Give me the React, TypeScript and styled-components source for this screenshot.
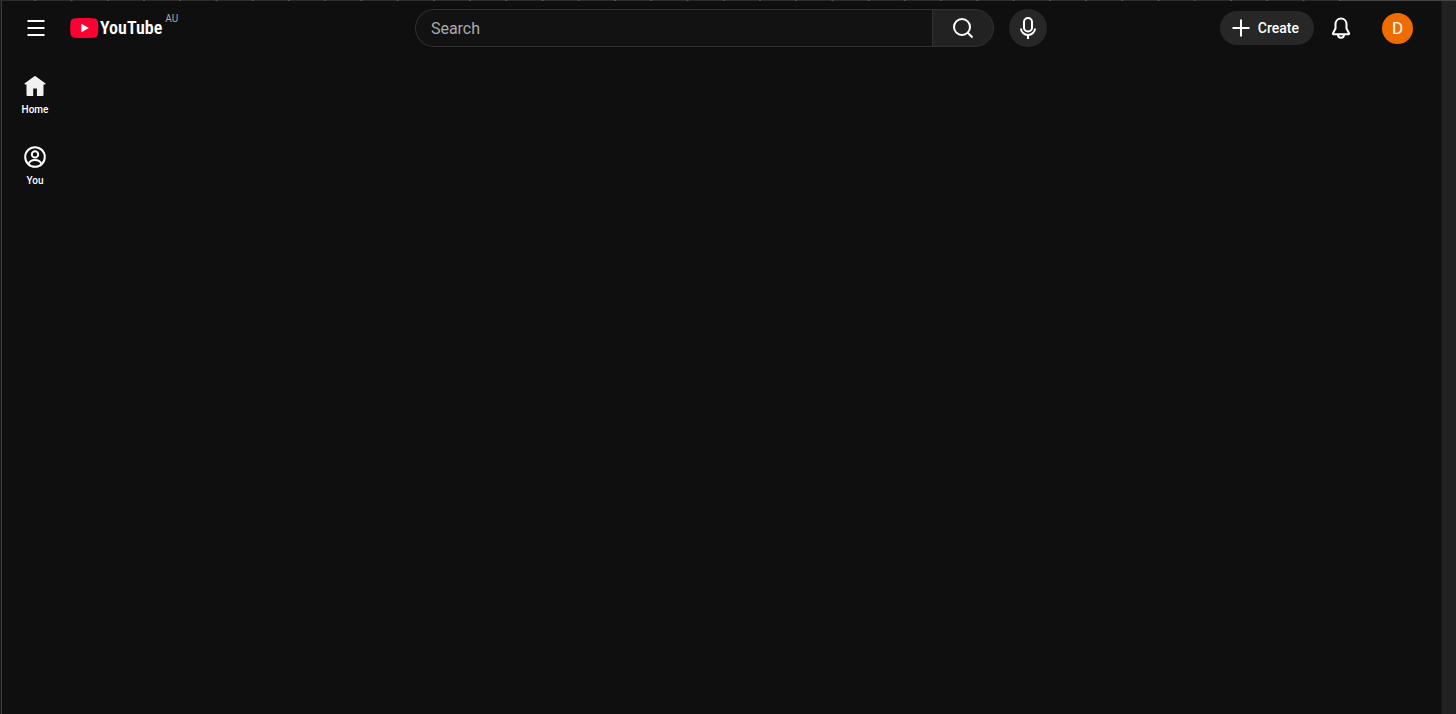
import React from "react";
import styled, { createGlobalStyle } from "styled-components";

const GlobalStyle = createGlobalStyle`
  * { box-sizing: border-box; }
  body {
    margin: 0;
    background: #0f0f0f;
    color: #fff;
    font-family: Roboto, "Liberation Sans", sans-serif;
  }
  button, input { font: inherit; color: inherit; }
`;

const Page = styled.div`
  display: flex;
  flex-direction: column;
  min-height: 100vh;
`;

const TabStrip = styled.div`
  display: flex;
  height: 1px;
  background: #444;
`;

const TabTicks = styled.div`
  flex: 1;
  margin-right: 115px;
  background: linear-gradient(#555, #555) right / 1px 1px no-repeat,
    linear-gradient(270deg, #555 2px, #2c2c2c 2px) left / calc(100% / 37) 100%;
`;

const Frame = styled.div`
  display: flex;
  flex: 1;
  border-left: 1px solid #1a1a1a;
`;

const Content = styled.div`
  flex: 1;
  min-width: 0;
  border-left: 1px solid #3c3c3c;
`;

const ScrollTrack = styled.div`
  width: 15px;
  background: #212121;
  border-left: 1px solid #191919;
`;

const Masthead = styled.header`
  display: flex;
  align-items: center;
  justify-content: space-between;
  height: 54px;
  padding: 0 28px 0 15px;
`;

const Start = styled.div`
  display: flex;
  align-items: center;
  gap: 15px;
  width: 225px;
`;

const Center = styled.div`
  display: flex;
  align-items: center;
  gap: 15px;
  flex: 0 1 632px;
`;

const End = styled.div`
  display: flex;
  align-items: center;
`;

const IconButton = styled.button<{ $size: number; $filled?: boolean }>`
  display: grid;
  place-items: center;
  flex: none;
  width: ${(p) => p.$size}px;
  height: ${(p) => p.$size}px;
  padding: 0;
  border: 0;
  border-radius: 50%;
  background: ${(p) => (p.$filled ? "#272727" : "transparent")};
  cursor: pointer;
`;

const LogoLink = styled.a`
  display: flex;
  align-items: center;
  gap: 1px;
  color: #fff;
  text-decoration: none;
`;

const Wordmark = styled.span`
  font: 600 18px/24px "Roboto Condensed", "Liberation Sans Narrow", "Liberation Sans", sans-serif;
`;

const Country = styled.span`
  align-self: flex-start;
  margin: -3px 0 0 2px;
  font-size: 10px;
  line-height: 12px;
  color: #aaa;
`;

const SearchForm = styled.form`
  display: flex;
  flex: 1;
  height: 38px;
`;

const SearchInput = styled.input`
  flex: 1;
  min-width: 0;
  padding: 0 15px;
  border: 1px solid #303030;
  border-right: 0;
  border-radius: 19px 0 0 19px;
  background: #121212;
  font-size: 16px;
  outline: none;
  &::placeholder { color: #aaa; opacity: 1; }
`;

const SearchButton = styled.button`
  display: grid;
  place-items: center;
  width: 62px;
  padding: 0;
  border: 1px solid #303030;
  border-radius: 0 19px 19px 0;
  background: #222;
  cursor: pointer;
`;

const CreateButton = styled.button`
  display: flex;
  align-items: center;
  gap: 5px;
  height: 34px;
  margin-right: 8px;
  padding: 0 15px 0 9px;
  border: 0;
  border-radius: 17px;
  background: #272727;
  font-size: 14px;
  font-weight: 500;
  cursor: pointer;
`;

const Avatar = styled.button`
  width: 31px;
  height: 31px;
  margin-left: 22px;
  padding: 0;
  border: 0;
  border-radius: 50%;
  background: #ef6c00;
  color: #fff;
  font-size: 17px;
  line-height: 31px;
  cursor: pointer;
`;

const MiniGuide = styled.nav`
  display: flex;
  flex-direction: column;
  width: 66px;
  padding-top: 4px;
`;

const GuideLink = styled.a`
  display: flex;
  flex-direction: column;
  align-items: center;
  gap: 5px;
  height: 71px;
  padding-top: 15px;
  color: #fff;
  font-size: 10px;
  line-height: 14px;
  font-weight: 500;
  text-decoration: none;
`;

const Svg = styled.svg`
  display: block;
  width: 24px;
  height: 24px;
  fill: none;
  stroke: #fff;
  stroke-width: 2;
`;

const MenuIcon = () => (
  <Svg viewBox="0 0 24 24" aria-hidden="true">
    <path d="M3.500 5h17M3.500 12h17M3.500 19h17" />
  </Svg>
);

const PlayLogo = () => (
  <svg width="29" height="20" viewBox="0 0 29 20" aria-hidden="true">
    <path
      fill="#ff0033"
      d="M27.700 3.100A3.600 3.600 0 0 0 25.200.6C23 0 14.300 0 14.300 0S5.500 0 3.300.6A3.600 3.600 0 0 0 .8 3.100C.2 5.300.2 10 .2 10s0 4.700.6 6.900a3.600 3.600 0 0 0 2.500 2.500c2.200.6 11 .6 11 .6s8.700 0 10.900-.6a3.600 3.600 0 0 0 2.500-2.500c.6-2.200.6-6.900.6-6.900s0-4.700-.6-6.900Z"
    />
    <path fill="#fff" d="M11.400 14.200V5.800l7.400 4.200Z" />
  </svg>
);

const SearchIcon = () => (
  <Svg viewBox="0 0 24 24" aria-hidden="true">
    <circle cx="11" cy="11" r="8" />
    <path d="m16.700 16.700 4.800 4.800" />
  </Svg>
);

const MicIcon = () => (
  <Svg viewBox="0 0 24 24" aria-hidden="true">
    <rect x="8" y="2" width="8" height="13.500" rx="4" />
    <path d="M5 12.500a7 6.500 0 0 0 14 0M12 19v4" />
  </Svg>
);

const PlusIcon = () => (
  <Svg viewBox="0 0 24 24" aria-hidden="true">
    <path d="M12 3.500v17M3.500 12h17" />
  </Svg>
);

const BellIcon = () => (
  <Svg viewBox="0 0 24 24" aria-hidden="true">
    <path
      strokeLinejoin="round"
      d="M12 2.500c-3.100 0-5.500 2.500-5.500 5.800v4.200L4 17.200c-.3.600 0 1.100.6 1.100h14.800c.6 0 .9-.5.600-1.100l-2.500-4.700V8.300c0-3.300-2.400-5.800-5.500-5.800Z"
    />
    <path d="M9 18.500c0 1.900 1.300 3.200 3 3.200s3-1.300 3-3.200" />
  </Svg>
);

const HomeIcon = () => (
  <Svg viewBox="0 0 24 24" aria-hidden="true">
    <path
      fill="#f1f1f1"
      stroke="none"
      d="m11.400 2.300-9.600 7a.7.7 0 0 0 .4 1.300h1.300v10.100c0 .8.600 1.300 1.300 1.300h5.400v-7.600h3.700V22h5.300c.8 0 1.300-.5 1.300-1.300V10.600h1.300a.7.7 0 0 0 .4-1.300l-9.600-7a1 1 0 0 0-1.200 0Z"
    />
  </Svg>
);

const YouIcon = () => (
  <Svg viewBox="0 0 24 24" aria-hidden="true">
    <circle cx="12" cy="12" r="9.800" />
    <circle cx="12" cy="9.400" r="3.200" />
    <path d="M5.600 19c.9-2.600 3.300-4 6.400-4s5.500 1.400 6.400 4" />
  </Svg>
);

export default function App() {
  return (
    <>
      <GlobalStyle />
      <Page>
        <TabStrip><TabTicks /></TabStrip>
        <Frame>
          <Content>
            <Masthead>
              <Start>
                <IconButton $size={38} aria-label="Guide"><MenuIcon /></IconButton>
                <LogoLink href="#" aria-label="YouTube AU">
                  <PlayLogo />
                  <Wordmark>YouTube</Wordmark>
                  <Country>AU</Country>
                </LogoLink>
              </Start>
              <Center>
                <SearchForm role="search" onSubmit={(e) => e.preventDefault()}>
                  <SearchInput aria-label="Search" placeholder="Search" />
                  <SearchButton aria-label="Submit search"><SearchIcon /></SearchButton>
                </SearchForm>
                <IconButton $size={38} $filled aria-label="Search with your voice"><MicIcon /></IconButton>
              </Center>
              <End>
                <CreateButton><PlusIcon />Create</CreateButton>
                <IconButton $size={38} aria-label="Notifications"><BellIcon /></IconButton>
                <Avatar aria-label="Account">D</Avatar>
              </End>
            </Masthead>
            <MiniGuide aria-label="Guide">
              <GuideLink href="#"><HomeIcon />Home</GuideLink>
              <GuideLink href="#"><YouIcon />You</GuideLink>
            </MiniGuide>
          </Content>
          <ScrollTrack />
        </Frame>
      </Page>
    </>
  );
}
